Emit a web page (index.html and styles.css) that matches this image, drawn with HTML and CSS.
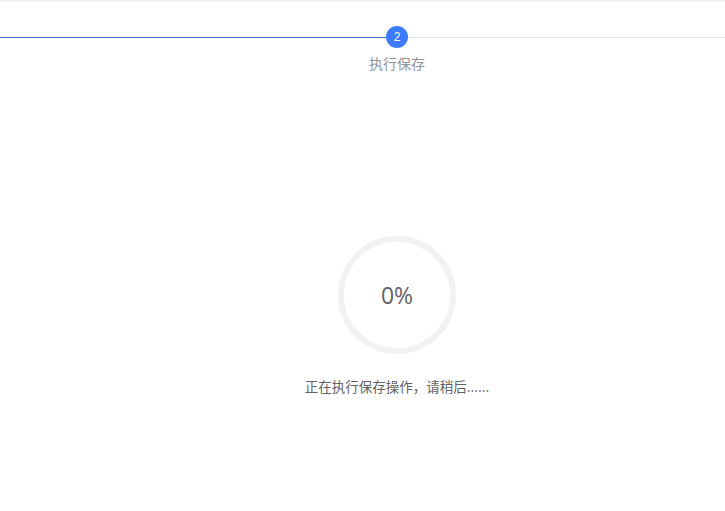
FILE: index.html
```html
<!DOCTYPE html>
<html lang="zh-CN">
<head>
    <meta charset="UTF-8">
    <meta name="viewport" content="width=device-width, initial-scale=1.0">
    <title>执行保存</title>
    <link rel="stylesheet" href="styles.css">
</head>
<body>
    <div class="page">
        <!-- step bar: done part on the left, pending part on the right -->
        <div class="steps">
            <div class="step-track">
                <span class="line line-done"></span>
                <span class="step-dot">2</span>
                <span class="line line-todo"></span>
            </div>
            <div class="step-title">执行保存</div>
        </div>

        <div class="progress">
            <div class="ring">
                <svg width="120" height="120" viewBox="0 0 120 120">
                    <circle cx="60" cy="60" r="56" fill="none" stroke="#f2f2f2" stroke-width="6"/>
                </svg>
                <span class="ring-text">0%</span>
            </div>
            <p class="progress-tip">正在执行保存操作，请稍后......</p>
        </div>
    </div>
</body>
</html>
```

FILE: styles.css
```css
* {
    margin: 0;
    padding: 0;
    box-sizing: border-box;
}

html, body {
    height: 100%;
}

body {
    font-family: "Microsoft YaHei", "Noto Sans CJK SC", "Liberation Sans", sans-serif;
    background: #fff;
    color: #606266;
    overflow: hidden;
}

.page {
    min-height: 100%;
    border-top: 2px solid #f0f0f0;
}

.steps {
    padding-top: 24px;
}

.step-track {
    display: flex;
    align-items: center;
    height: 22px;
}

.line {
    height: 1px;
}

.line-done {
    width: 386px;
    background: #4a70d8;
}

.line-todo {
    flex: 1;
    background: #dcdfe6;
}

.step-dot {
    width: 22px;
    height: 22px;
    border-radius: 50%;
    background: #3c7bfc;
    color: #fff;
    font-family: "Liberation Sans", sans-serif;
    font-size: 12px;
    display: flex;
    align-items: center;
    justify-content: center;
}

.step-title,
.progress {
    padding-left: 69px;
}

.step-title {
    text-align: center;
    margin-top: 5px;
    font-size: 14px;
    line-height: 20px;
    color: #909399;
}

.progress {
    display: flex;
    flex-direction: column;
    align-items: center;
    padding-top: 162px;
}

.ring {
    position: relative;
    width: 120px;
    height: 120px;
}

.ring svg {
    display: block;
}

.ring-text {
    position: absolute;
    inset: 0;
    display: flex;
    align-items: center;
    justify-content: center;
    font-family: "Open Sans", "Liberation Sans", sans-serif;
    font-size: 23px;
    color: #606266;
}

.progress-tip {
    margin-top: 21px;
    font-size: 13.5px;
    line-height: 20px;
    color: #606266;
}
```
